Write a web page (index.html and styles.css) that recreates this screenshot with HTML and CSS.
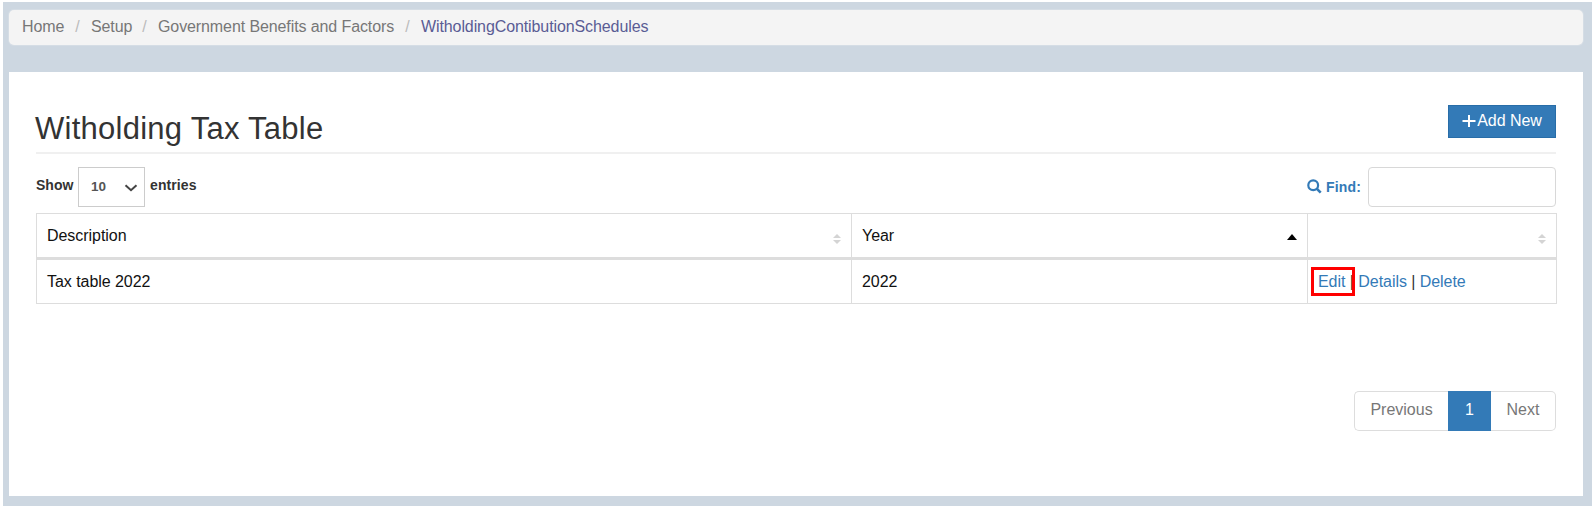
FILE: index.html
```
<!DOCTYPE html>
<html lang="en">
<head>
<meta charset="utf-8">
<title>Witholding Tax Table</title>
<link rel="stylesheet" href="styles.css">
</head>
<body>
<div class="page">
  <nav class="breadcrumb">
    <a class="home">Home</a><i>/</i><a class="setup">Setup</a><i>/</i><a class="gov">Government Benefits and Factors</a><i>/</i><a class="current">WitholdingContibutionSchedules</a>
  </nav>
  <main class="panel">
    <header class="head">
      <h2>Witholding Tax Table</h2>
      <button class="add"><svg width="14" height="14" viewBox="0 0 14 14"><path d="M7 1v12M.5 7h13" stroke="#fff" stroke-width="2" fill="none"/></svg><span>Add New</span></button>
    </header>
    <div class="tools">
      <label class="length"><span class="show">Show</span><span class="select"><span>10</span><svg width="14" height="8" viewBox="0 0 14 8"><path d="M1.500 1.200L7 6.200l5.500-5" stroke="#444" stroke-width="2" fill="none"/></svg></span><span class="entries">entries</span></label>
      <label class="find"><svg width="15" height="15" viewBox="0 0 15 15"><circle cx="6.200" cy="6.200" r="4.900" fill="none" stroke="#337ab7" stroke-width="2.200"/><path d="M9.700 9.700l4 4" stroke="#337ab7" stroke-width="2.600"/></svg><span>Find:</span><input type="text"></label>
    </div>
    <table class="grid">
      <colgroup><col class="c1"><col class="c2"><col class="c3"></colgroup>
      <thead><tr>
        <th><div class="th"><span>Description</span><svg class="sort" width="8" height="10" viewBox="0 0 8 10"><path d="M0 4l4-4 4 4zM0 6l4 4 4-4z" fill="#d4d4d4"/></svg></div></th>
        <th><div class="th"><span>Year</span><svg class="sort up" width="10" height="6" viewBox="0 0 10 6"><path d="M0 6l5-6 5 6z" fill="#000"/></svg></div></th>
        <th><div class="th"><span></span><svg class="sort" width="8" height="10" viewBox="0 0 8 10"><path d="M0 4l4-4 4 4zM0 6l4 4 4-4z" fill="#d4d4d4"/></svg></div></th>
      </tr></thead>
      <tbody><tr>
        <td>Tax table 2022</td>
        <td>2022</td>
        <td class="actions"><a>Edit</a> | <a>Details</a> | <a>Delete</a><span class="mark"></span></td>
      </tr></tbody>
    </table>
    <div class="pager"><a class="prev">Previous</a><a class="on">1</a><a class="next">Next</a></div>
  </main>
</div>
</body>
</html>
```
FILE: styles.css
```
* { box-sizing: border-box; }
body { margin: 0; background: #fff; font: 16px/20px "Liberation Sans", Arial, sans-serif; color: #111; overflow: hidden; }
.page { width: 1589px; height: 504px; margin: 2px 0 0 3px; padding: 8px 9px 0 6px; background: #cdd7e1; }
.breadcrumb { height: 35px; padding: 0 13px 1px; display: flex; align-items: center; background: #f4f4f4; border-radius: 5px; color: #777; box-shadow: 0 0 0 1px #d5dde5; }
.breadcrumb a { white-space: nowrap; }
.breadcrumb i { width: 27px; text-align: center; font-style: normal; color: #bbb; }
.breadcrumb .home { width: 42px; letter-spacing: -.1px; }
.breadcrumb .setup { width: 40px; letter-spacing: -.1px; }
.breadcrumb .gov { width: 236px; letter-spacing: -.1px; }
.breadcrumb .current { color: #5a5c94; letter-spacing: -.1px; }
.panel { height: 424px; margin-top: 27px; padding: 33px 27px 0 27px; background: #fff; }
.head { height: 49px; display: flex; justify-content: space-between; align-items: flex-start; border-bottom: 2px solid #f0f0f0; }
h2 { margin: 6px 0 0 -1px; font-size: 31px; font-weight: 400; line-height: 36px; color: #333; letter-spacing: .26px; }
.add { width: 108px; height: 33px; padding: 0 0 1px; display: flex; align-items: center; justify-content: center; gap: 1px; border: 1px solid #286da8; background: #337ab7; color: #fff; font: inherit; letter-spacing: -.05px; }
.tools { display: flex; justify-content: space-between; padding-top: 13px; height: 59px; font-size: 14px; font-weight: 700; color: #333; }
.length, .find { display: flex; align-items: flex-start; }
.show { width: 42px; padding-top: 8px; }
.entries { margin-left: 5px; padding-top: 8px; letter-spacing: .1px; }
.select { width: 67px; height: 40px; padding: 0 6px 0 12px; display: flex; align-items: center; justify-content: space-between; border: 1px solid #ccc; color: #555; font-size: 13.5px; }
.select svg { position: relative; top: 1px; }
.find { color: #337ab7; }
.find svg { margin-top: 12px; }
.find span { width: 42px; margin: 10px 0 0 4px; letter-spacing: .2px; }
.find input { width: 188px; height: 40px; border: 1px solid #d8d8d8; border-radius: 4px; background: #fff; }
.grid { width: 1520px; table-layout: fixed; border-collapse: collapse; letter-spacing: -.05px; }
.c1 { width: 815px; }
.c2 { width: 456px; }
.c3 { width: 249px; }
.grid th, .grid td { border: 1px solid #ddd; padding: 0 10px; text-align: left; font-weight: 400; height: 45px; }
.grid th { border-bottom: 3px solid #ddd; }
.th { display: flex; justify-content: space-between; align-items: center; }
.sort { position: relative; top: 3px; }
.sort.up { top: 1px; }
.grid .actions { position: relative; color: #333; }
.actions a { color: #337ab7; }
.mark { position: absolute; left: 3px; top: 7px; width: 44px; height: 29px; border: 3px solid #f00; }
.pager { display: flex; justify-content: flex-end; margin-top: 87px; color: #777; }
.pager a { height: 40px; padding-bottom: 2px; display: flex; align-items: center; justify-content: center; border: 1px solid #ddd; }
.pager .prev { width: 94px; border-radius: 5px 0 0 5px; border-right: 0; }
.pager .on { width: 43px; background: #337ab7; border-color: #337ab7; color: #fff; }
.pager .next { width: 65px; border-radius: 0 5px 5px 0; border-left: 0; }
```
